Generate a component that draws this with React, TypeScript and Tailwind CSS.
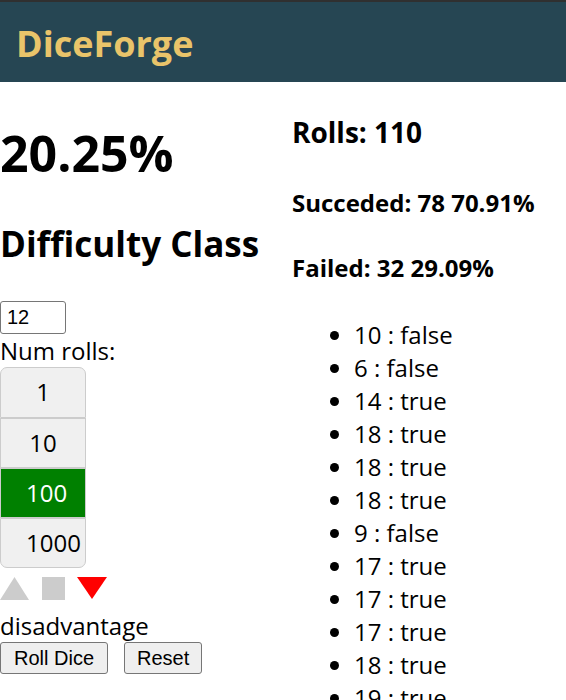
import { useState } from 'react'

const rolls: Array<[number, boolean]> = [
  [10, false],
  [6, false],
  [14, true],
  [18, true],
  [18, true],
  [18, true],
  [9, false],
  [17, true],
  [17, true],
  [17, true],
  [18, true],
  [19, true],
]

const rollOptions = [1, 10, 100, 1000]

export default function App() {
  const [numRolls, setNumRolls] = useState(100)
  const [dc, setDc] = useState('12')

  return (
    <div className="min-h-[700px] bg-white text-black font-['Open_Sans',sans-serif]">
      {/* Header */}
      <header className="h-[82px] border-t-2 border-[#303030] bg-[#264653] pl-4 pt-[24px]">
        <h1 className="text-[36px] font-bold leading-none text-[#e9c46a]">
          DiceForge
        </h1>
      </header>

      <div className="flex">
        {/* Left column */}
        <div className="w-[292px] shrink-0">
          <div className="mt-[46px] text-[50px] font-bold leading-none">
            20.25%
          </div>
          <h2 className="mt-[48px] text-[35px] font-bold leading-none">
            Difficulty Class
          </h2>
          <input
            value={dc}
            onChange={(e) => setDc(e.target.value)}
            className="mt-[40px] block h-[33px] w-[66px] rounded-[3px] border border-[#767676] px-[6px] font-['Liberation_Sans',Arial,sans-serif] text-[20px] leading-none"
          />
          <div className="text-[24px] leading-[33px]">Num rolls:</div>
          <div className="flex w-[86px] flex-col">
            {rollOptions.map((n, i) => (
              <div
                key={n}
                onClick={() => setNumRolls(n)}
                className={
                  'h-[50px] cursor-pointer border border-[#cccccc] px-[25px] text-center text-[24px] leading-[48px] whitespace-nowrap ' +
                  (i === 0 ? 'h-[51px] rounded-t-[7px] ' : '') +
                  (i === rollOptions.length - 1 ? 'rounded-b-[7px] ' : '') +
                  (numRolls === n
                    ? 'bg-[#008000] text-white'
                    : 'bg-[#f0f0f0] text-black')
                }
              >
                {n}
              </div>
            ))}
          </div>
          <div className="mt-[9px] flex h-[23px] items-end">
            <svg width="29" height="23" viewBox="0 0 29 23">
              <polygon points="14.5,0 29,23 0,23" fill="#cccccc" />
            </svg>
            <div className="ml-[13px] h-[23px] w-[23px] bg-[#cccccc]" />
            <svg className="ml-[12px]" width="30" height="23" viewBox="0 0 30 23">
              <polygon points="0,0 30,0 15,22" fill="#ff0000" />
            </svg>
          </div>
          <div className="mt-[9px] text-[24px] leading-[33px]">disadvantage</div>
          <div className="flex gap-4 font-['Liberation_Sans',Arial,sans-serif]">
            <button className="h-[32px] rounded-[3px] border border-[#767676] bg-[#efefef] px-[13px] text-[20px] leading-none">
              Roll Dice
            </button>
            <button className="h-[32px] rounded-[3px] border border-[#767676] bg-[#efefef] px-[12px] text-[20px] leading-none">
              Reset
            </button>
          </div>
        </div>

        {/* Right column */}
        <div className="flex-1">
          <h3 className="mt-[36px] text-[28px] font-bold leading-none">
            Rolls: 110
          </h3>
          <h4 className="mt-[45px] text-[24px] font-bold leading-none">
            Succeded: 78 70.91%
          </h4>
          <h4 className="mt-[41px] text-[24px] font-bold leading-none">
            Failed: 32 29.09%
          </h4>
          <ul className="mt-[38px] list-disc pl-[62px] text-[24px] leading-[33px]">
            {rolls.map(([value, ok], i) => (
              <li key={i}>
                {value} : {ok ? 'true' : 'false'}
              </li>
            ))}
          </ul>
        </div>
      </div>
    </div>
  )
}
